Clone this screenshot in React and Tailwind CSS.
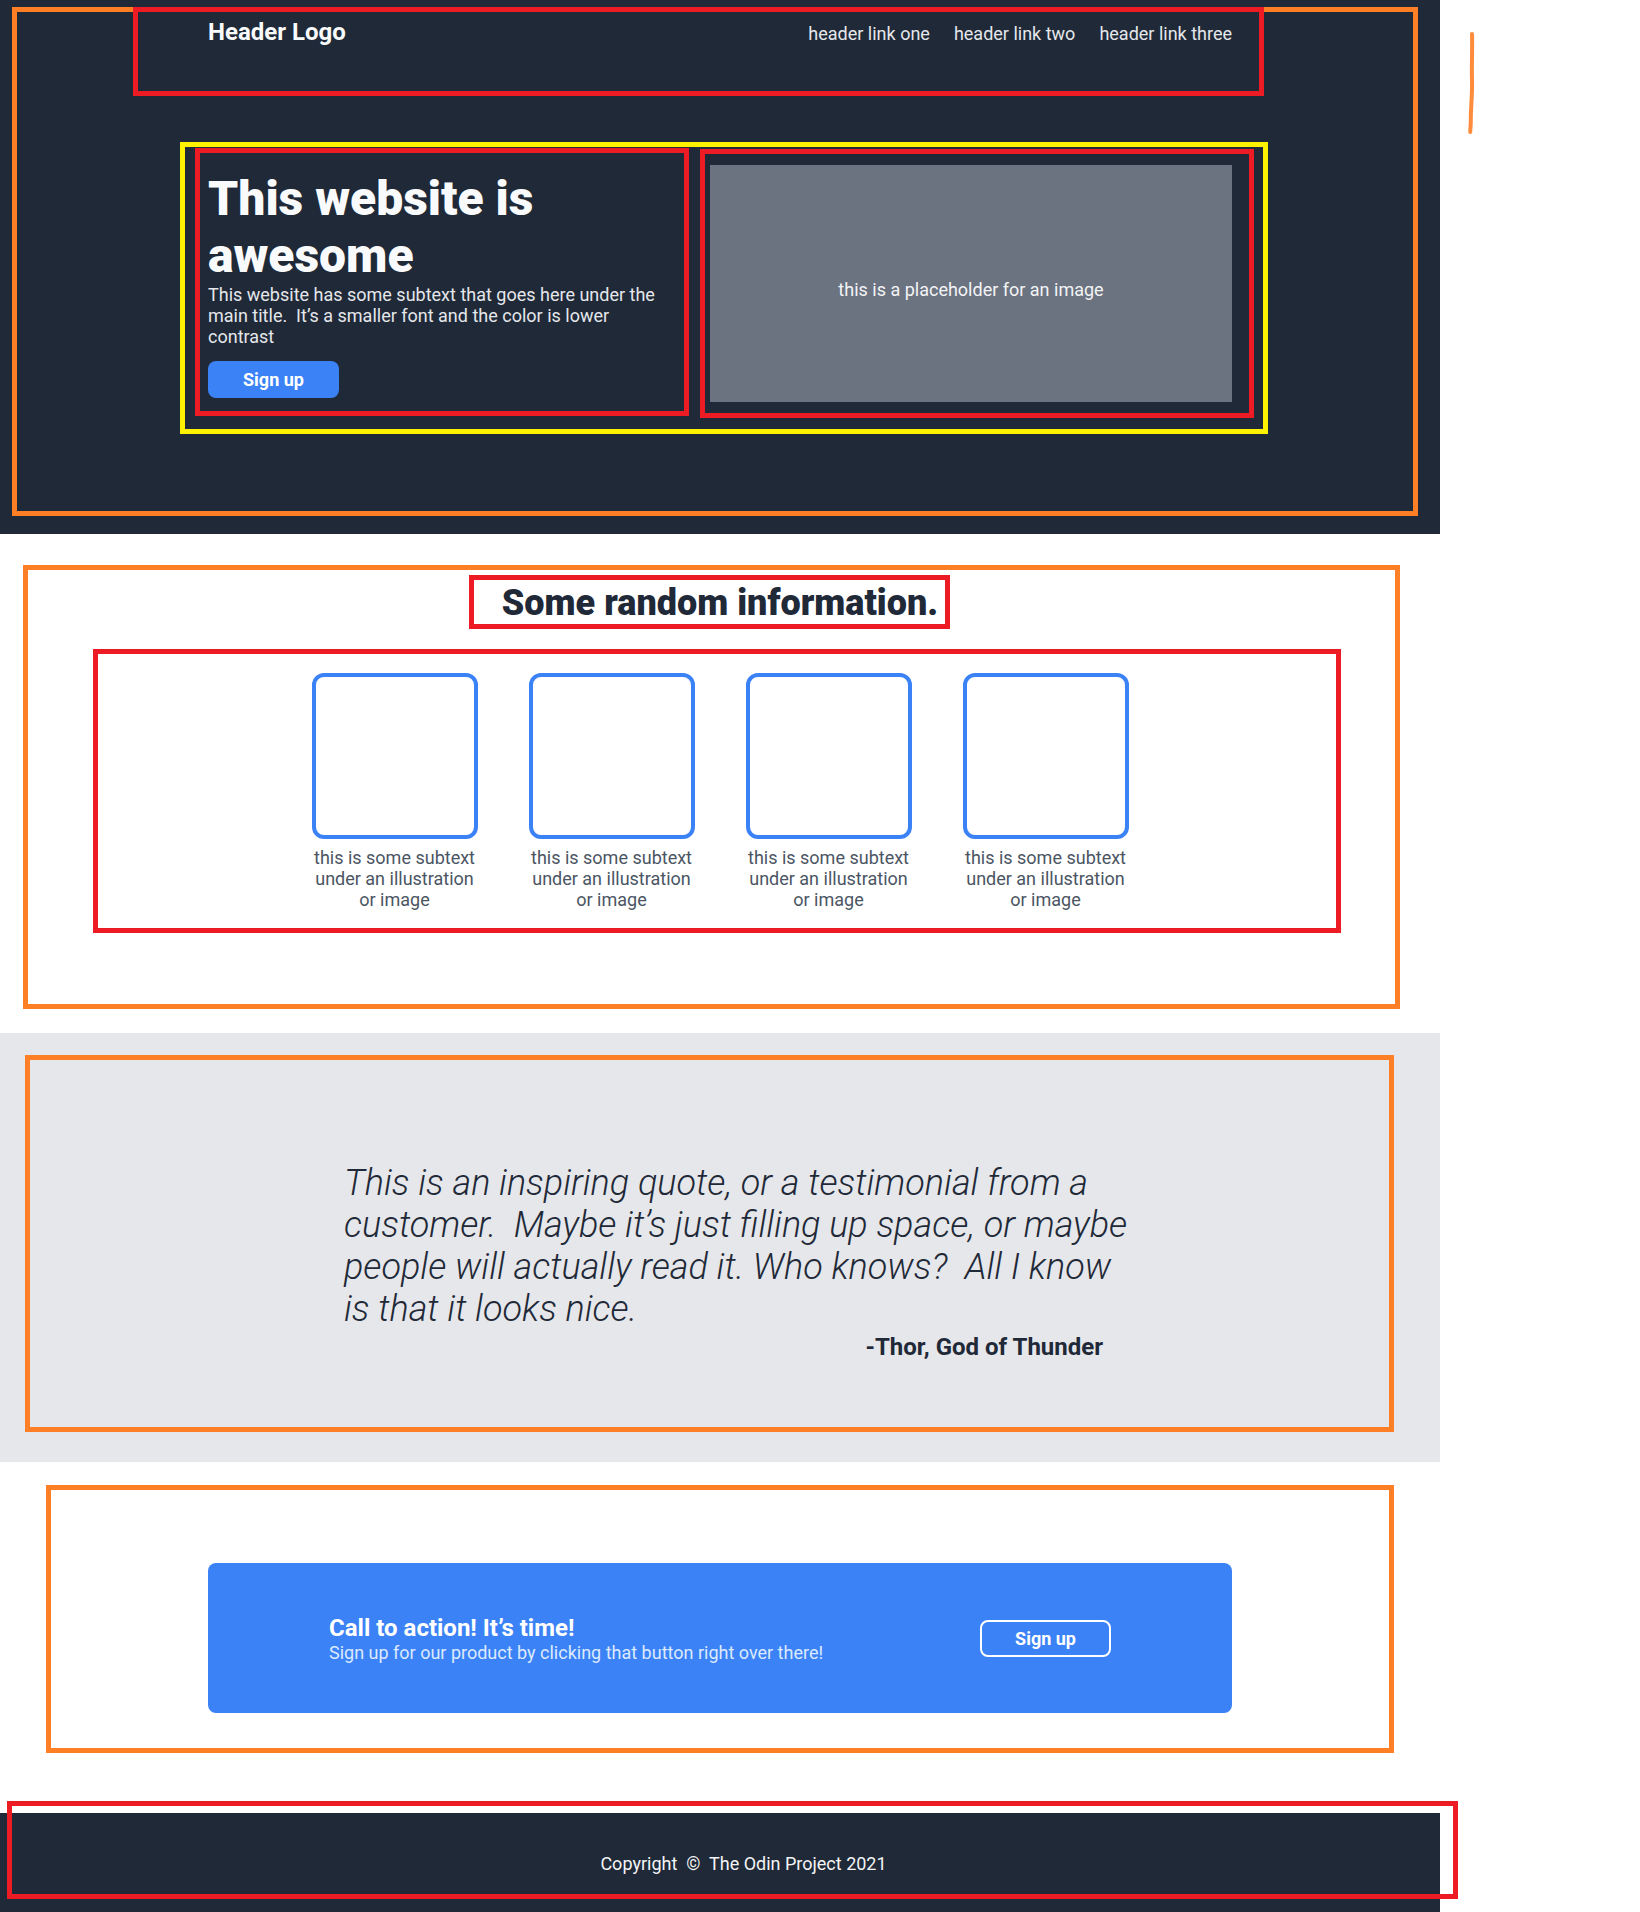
import React from "react";

function Box({ className }) {
  return <div className={"absolute border-[5px] pointer-events-none " + className} />;
}

function Card() {
  return (
    <div className="flex w-[166px] flex-col items-center">
      <div className="h-[166px] w-[166px] rounded-xl border-4 border-[#3b82f6]" />
      <p className="mt-2 text-center text-lg leading-[normal] text-[#4b5563]">
        this is some subtext
        <br />
        under an illustration
        <br />
        or image
      </p>
    </div>
  );
}

export default function App() {
  return (
    <div className="relative min-h-[1912px] w-[1640px] bg-white font-['Roboto',sans-serif]">
      <div className="w-[1440px]">
        {/* HERO */}
        <section className="bg-[#1f2937] pb-[132px]">
          <div className="mx-auto max-w-5xl">
            <header className="flex items-baseline justify-between pt-[18px]">
              <div className="text-2xl font-bold leading-[normal] text-[#f9fafb]">Header Logo</div>
              <nav className="flex gap-6 text-lg leading-[normal] text-[#e5e7eb]">
                <a>header link one</a>
                <a>header link two</a>
                <a>header link three</a>
              </nav>
            </header>
            <div className="mt-[119px] flex items-center justify-between">
              <div className="w-[470px]">
                <h1 className="text-5xl font-black leading-[normal] text-[#f9fafb]">
                  This website is
                  <br />
                  awesome
                </h1>
                <p className="text-lg leading-[normal] text-[#e5e7eb]">
                  This website has some subtext that goes here under the
                  <br />
                  main title.{"\u00a0"} It’s a smaller font and the color is lower
                  <br />
                  contrast
                </p>
                <button className="mt-[14px] rounded-lg bg-[#3b82f6] px-[35px] py-2 text-lg font-bold leading-[normal] text-white">
                  Sign up
                </button>
              </div>
              <div className="flex h-[237px] w-[522px] items-center justify-center bg-[#6b7280] pt-3 text-lg leading-[normal] text-[#f3f4f6]">
                this is a placeholder for an image
              </div>
            </div>
          </div>
        </section>

        {/* INFO */}
        <section className="bg-white pb-[123px] pt-12">
          <h2 className="text-center text-4xl font-black leading-[normal] text-[#1f2937]">
            Some random information.
          </h2>
          <div className="mt-[49px] flex justify-center gap-[51px]">
            <Card />
            <Card />
            <Card />
            <Card />
          </div>
        </section>

        {/* QUOTE */}
        <section className="bg-[#e5e7eb] pb-[101px] pt-[129px]">
          <div className="mx-auto max-w-5xl pl-[136px]">
            <div className="w-[820px]">
              <p className="text-4xl font-light italic leading-[normal] text-[#1f2937]">
                This is an inspiring quote, or a testimonial from a
                <br />
                customer.{"\u00a0"} Maybe it’s just filling up space, or maybe
                <br />
                people will actually read it. Who knows?{"\u00a0"} All I know
                <br />
                is that it looks nice.
              </p>
              <p className="mt-[3px] pr-[61px] text-right text-2xl font-bold leading-[normal] text-[#1f2937]">
                -Thor, God of Thunder
              </p>
            </div>
          </div>
        </section>

        {/* CTA */}
        <section className="bg-white pb-[100px] pt-[101px]">
          <div className="mx-auto flex h-[150px] max-w-5xl items-center justify-between rounded-lg bg-[#3b82f6] px-[121px]">
            <div>
              <div className="text-2xl font-bold leading-[normal] text-white">Call to action! It’s time!</div>
              <div className="text-lg leading-[normal] text-[#dbeafe]">
                Sign up for our product by clicking that button right over there!
              </div>
            </div>
            <button className="rounded-lg border-2 border-white px-[33px] py-[6px] text-lg font-bold leading-[normal] text-white">
              Sign up
            </button>
          </div>
        </section>

        {/* FOOTER */}
        <footer className="flex h-[100px] items-center justify-center bg-[#1f2937] pl-[47px]">
          <p className="text-lg leading-[normal] text-[#f3f4f6]">
            Copyright{"\u00a0"} ©{"\u00a0"} The Odin Project 2021
          </p>
        </footer>
      </div>

      {/* annotation overlays */}
      <Box className="left-[12px] top-[7px] h-[509px] w-[1406px] border-[#ff7f27]" />
      <Box className="left-[23px] top-[565px] h-[444px] w-[1377px] border-[#ff7f27]" />
      <Box className="left-[25px] top-[1055px] h-[377px] w-[1369px] border-[#ff7f27]" />
      <Box className="left-[46px] top-[1485px] h-[268px] w-[1348px] border-[#ff7f27]" />
      <Box className="left-[180px] top-[142px] h-[292px] w-[1088px] border-[#fff200]" />
      <Box className="left-[133px] top-[7px] h-[89px] w-[1131px] border-[#ed1c24]" />
      <Box className="left-[195px] top-[148px] h-[268px] w-[494px] border-[#ed1c24]" />
      <Box className="left-[700px] top-[149px] h-[269px] w-[554px] border-[#ed1c24]" />
      <Box className="left-[469px] top-[575px] h-[54px] w-[481px] border-[#ed1c24]" />
      <Box className="left-[93px] top-[649px] h-[284px] w-[1248px] border-[#ed1c24]" />
      <Box className="left-[7px] top-[1801px] h-[98px] w-[1451px] border-[#ed1c24]" />

      <svg className="absolute left-[1462px] top-[30px]" width="18" height="108" viewBox="0 0 18 108">
        <path
          d="M10 4 C 10.5 20, 9.5 35, 10 50 S 8.5 80, 8.8 92 L 8.2 102"
          fill="none"
          stroke="#ff7f27"
          strokeWidth="4"
          strokeLinecap="round"
          opacity="0.9"
        />
      </svg>
    </div>
  );
}
